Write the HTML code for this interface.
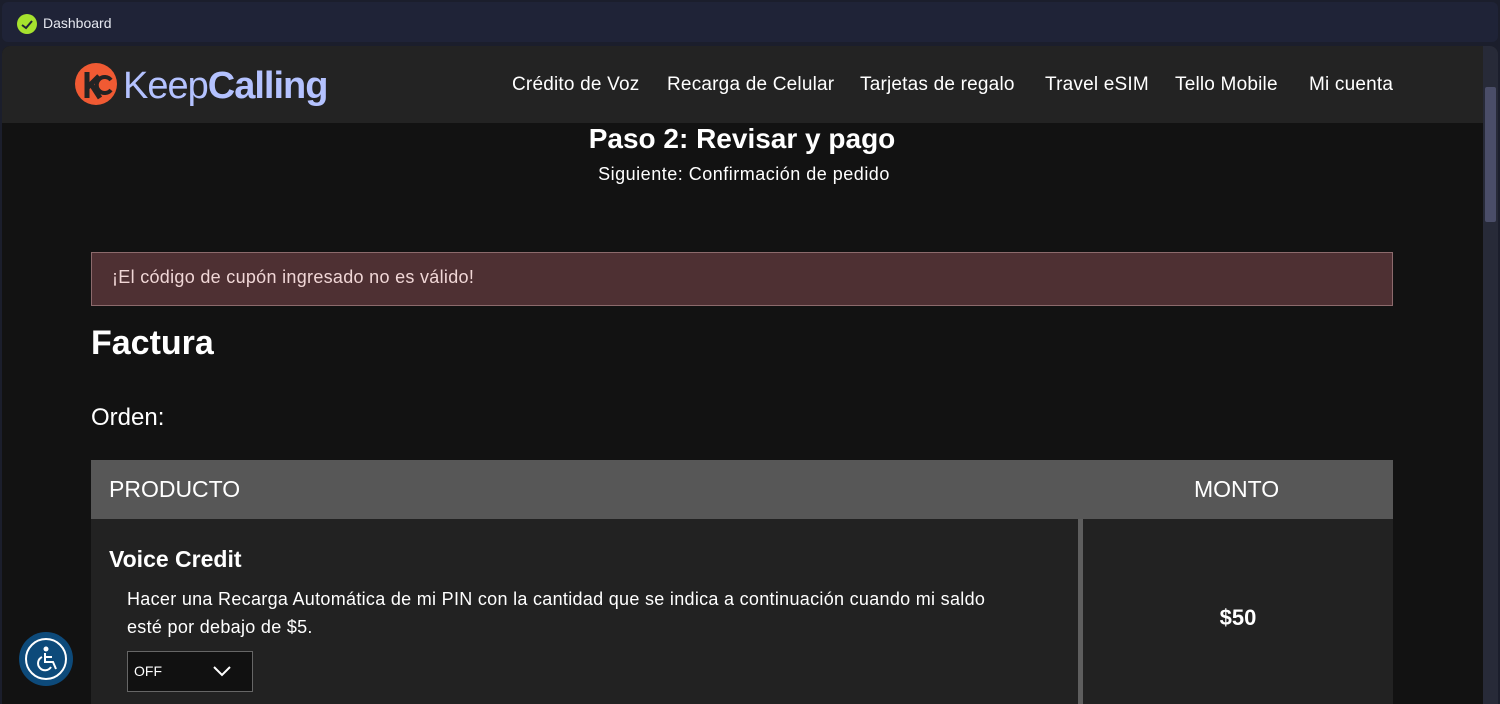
<!DOCTYPE html>
<html><head><meta charset="utf-8"><style>
*{margin:0;padding:0;box-sizing:border-box}
body{width:1500px;height:704px;overflow:hidden;background:#1b1e2c;font-family:"Liberation Sans","DejaVu Sans",sans-serif;color:#fff;position:relative}
.tb{position:absolute;left:2px;top:2px;width:1496px;height:40px;background:#1f2337;border-radius:6px}
.tb .ic{position:absolute;left:15px;top:12px;width:20px;height:20px;border-radius:50%;background:#a6e22e}
.tb span{position:absolute;left:41px;top:13px;font-size:14px;color:#e6e8f0}
.win{position:absolute;left:2px;top:46px;width:1496px;height:658px;background:#121212;border-radius:8px 8px 0 0;overflow:hidden}
.nav{height:77px;background:#232323;position:relative}
.nav a{position:absolute;top:28px;font-size:19px;color:#fff;text-decoration:none;letter-spacing:0.2px}
.logo{position:absolute;left:73px;top:16px}
.sb{position:absolute;left:1481px;top:0;width:15px;height:658px;background:#272a38}
.sb i{position:absolute;left:2px;top:41px;width:11px;height:135px;background:#4a4d68;border-radius:2px}
.t{position:absolute;text-align:center;width:1500px;left:-10px}
.alert{position:absolute;left:89px;top:206px;width:1302px;height:54px;background:#4e3033;border:1px solid #8c6a6c;color:#f0d6d6;font-size:18px;padding:14px 20px;letter-spacing:0.3px}
.th{position:absolute;left:89px;top:414px;width:1302px;height:59px;background:#575757}
.cell{position:absolute;top:473px;height:185px;background:#222}
</style></head><body>
<div class="tb"><div class="ic"><svg width="20" height="20"><path d="M5 11l4 3 6-7" stroke="#1f2337" stroke-width="2" fill="none"/></svg></div><span>Dashboard</span></div>
<div class="win">
<div class="nav">
<div class="logo"><svg width="260" height="46"><circle cx="21" cy="22" r="21" fill="#f05a33"/><path d="M12 10v26M12 26l12-12M16 22l9 14" stroke="#232323" stroke-width="5" fill="none"/><path d="M36 18a8 8 0 1 0 0 10" stroke="#232323" stroke-width="4" fill="none"/><text x="48" y="36" font-family="Liberation Sans,sans-serif" font-size="38" fill="#b4c2ff" letter-spacing="-1">Keep<tspan font-weight="bold">Calling</tspan></text></svg></div>
<a style="left:510px">Crédito de Voz</a>
<a style="left:665px">Recarga de Celular</a>
<a style="left:858px">Tarjetas de regalo</a>
<a style="left:1043px">Travel eSIM</a>
<a style="left:1173px">Tello Mobile</a>
<a style="left:1307px">Mi cuenta</a>
</div>
<div class="t" style="top:77px;font-size:28px;font-weight:bold">Paso 2: Revisar y pago</div>
<div class="t" style="top:118px;font-size:18px;left:-8px;letter-spacing:0.5px">Siguiente: Confirmación de pedido</div>
<div class="alert">¡El código de cupón ingresado no es válido!</div>
<div style="position:absolute;left:89px;top:278px;font-size:34px;font-weight:bold">Factura</div>
<div style="position:absolute;left:89px;top:358px;font-size:24px">Orden:</div>
<div class="th"><span style="position:absolute;left:18px;top:16px;font-size:23px">PRODUCTO</span><span style="position:absolute;left:1103px;top:16px;font-size:23px">MONTO</span></div>
<div class="cell" style="left:89px;width:987px">
<div style="position:absolute;left:18px;top:27px;font-size:23px;font-weight:bold">Voice Credit</div>
<div style="position:absolute;left:36px;top:66px;width:880px;font-size:18px;line-height:28px;letter-spacing:0.3px">Hacer una Recarga Automática de mi PIN con la cantidad que se indica a continuación cuando mi saldo esté por debajo de $5.</div>
<div style="position:absolute;left:36px;top:132px;width:126px;height:41px;background:#111;border:1px solid #666;font-size:14px;padding:11px 6px">OFF<svg style="position:absolute;left:84px;top:13px" width="20" height="12"><path d="M2 2l8 8 8-8" stroke="#fff" stroke-width="2" fill="none"/></svg></div>
</div>
<div class="cell" style="left:1076px;width:5px;background:#5e5e5e"></div>
<div class="cell" style="left:1081px;width:310px"><div style="position:absolute;width:100%;text-align:center;top:86px;font-size:22px;font-weight:bold">$50</div></div>
<div class="sb"><i></i></div>
</div>
<div style="position:absolute;left:19px;top:632px;width:54px;height:54px;border-radius:50%;background:#0d4a7a"><svg width="54" height="54"><circle cx="27" cy="27" r="20" stroke="#fff" stroke-width="2" fill="none"/><circle cx="27" cy="17" r="2.5" fill="#fff"/><path d="M26 21v9h8l3 7M26 25h7M23 25a7 7 0 1 0 9 10" stroke="#fff" stroke-width="2" fill="none"/></svg></div>
</body></html>
